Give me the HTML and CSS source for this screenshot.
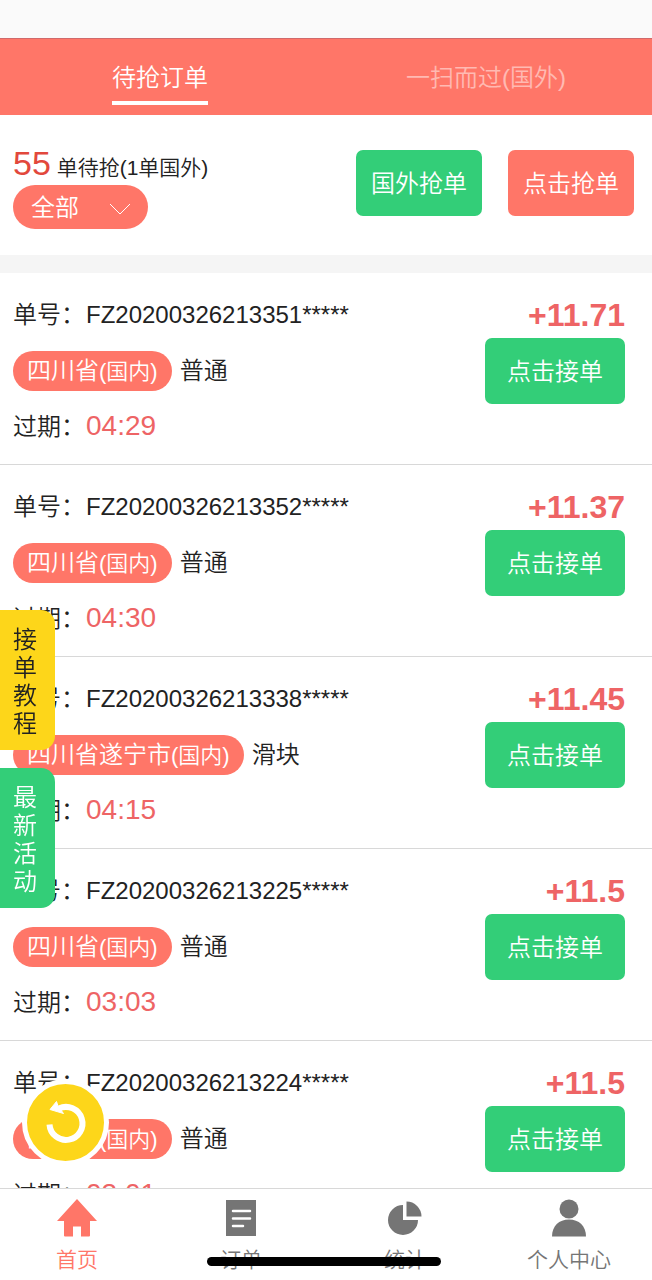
FILE: index.html
```
<!DOCTYPE html>
<html lang="zh-CN">
<head>
    <meta charset="UTF-8">
    <meta name="viewport" content="width=device-width, initial-scale=1.0">
    <title>待抢订单</title>
    <link rel="stylesheet" href="styles.css">
</head>
<body>
    <div class="app">
        <div class="status-bar"></div>
        <header class="tabs">
            <div class="tab-cell"><button class="tab active">待抢订单</button></div>
            <div class="tab-cell"><button class="tab">一扫而过(国外)</button></div>
        </header>

        <section class="summary">
            <div class="summary-left">
                <p class="count"><span class="count-number">55</span> 单待抢(1单国外)</p>
                <div class="filter">
                    <select class="filter-select" aria-label="筛选">
                        <option>全部</option>
                        <option>国内</option>
                        <option>国外</option>
                    </select>
                    <svg class="filter-arrow" viewBox="0 0 22 12"><path d="M1 1l10 10L21 1"/></svg>
                </div>
            </div>
            <div class="summary-actions">
                <button class="btn btn-green">国外抢单</button>
                <button class="btn btn-red">点击抢单</button>
            </div>
        </section>

        <main class="orders" id="orders"></main>

        <nav class="tabbar">
            <a class="tabbar-item active" href="#home">
                <svg class="tabbar-icon" viewBox="0 0 42 40"><path d="M21 1L1 23h7v14.500q0 1 1 1h8v-10h8v10h8q1 0 1-1V23h7z"/></svg>
                <span>首页</span>
            </a>
            <a class="tabbar-item" href="#orders">
                <svg class="tabbar-icon" viewBox="0 0 42 40"><path d="M6 2h30v36H6z"/><path class="icon-line" d="M13 13h17M13 20.500h17M13 28h10"/></svg>
                <span>订单</span>
            </a>
            <a class="tabbar-item" href="#stats">
                <svg class="tabbar-icon" viewBox="0 0 42 40"><path d="M19 7a15 15 0 1 0 15 15H19z"/><path d="M22.500 3.500a15 15 0 0 1 15 15h-15z"/></svg>
                <span>统计</span>
            </a>
            <a class="tabbar-item" href="#mine">
                <svg class="tabbar-icon" viewBox="0 0 42 40"><circle cx="21" cy="11" r="9.500"/><path d="M4 38.500C4 28 11 21.500 21 21.500S38 28 38 38.500z"/></svg>
                <span>个人中心</span>
            </a>
        </nav>
    </div>

    <div class="side-links">
        <a class="side-link side-yellow" href="#guide">接单教程</a>
        <a class="side-link side-green" href="#events">最新活动</a>
    </div>
    <button class="refresh" aria-label="刷新">
        <svg viewBox="0 0 44 44"><path class="refresh-arc" d="M5.500 23.500A16.500 16.500 0 1 0 15 7.500"/><path class="refresh-head" d="M6 8.500L12.500 .5L14 5L19.500 12.500z"/></svg>
    </button>
    <div class="home-indicator"></div>

    <script>
        const orders = [
            { no: "FZ20200326213351*****", area: "四川省", type: "普通", time: "04:29", price: "+11.71" },
            { no: "FZ20200326213352*****", area: "四川省", type: "普通", time: "04:30", price: "+11.37" },
            { no: "FZ20200326213338*****", area: "四川省遂宁市", type: "滑块", time: "04:15", price: "+11.45" },
            { no: "FZ20200326213225*****", area: "四川省", type: "普通", time: "03:03", price: "+11.5" },
            { no: "FZ20200326213224*****", area: "四川省", type: "普通", time: "03:01", price: "+11.5" }
        ];

        document.getElementById("orders").innerHTML = orders.map(o => `
            <article class="order">
                <div class="order-info">
                    <p class="order-row"><span class="label">单号：</span>${o.no}</p>
                    <p class="order-area"><span class="pill">${o.area}<small>(国内)</small></span>${o.type}</p>
                    <p class="order-row"><span class="label">过期：</span><span class="time">${o.time}</span></p>
                </div>
                <div class="order-side">
                    <strong class="price">${o.price}</strong>
                    <button class="btn btn-green btn-take">点击接单</button>
                </div>
            </article>`).join("");
    </script>
</body>
</html>
```
FILE: styles.css
```
* {
    box-sizing: border-box;
}
body {
    margin: 0;
    font-family: "Liberation Sans", "Noto Sans CJK SC", sans-serif;
    font-size: 24px;
    font-weight: 350;
    color: #222;
    background: #fff;
}
p {
    margin: 0;
}
button, select {
    font: inherit;
    border: none;
    padding: 0;
    cursor: pointer;
}
a {
    text-decoration: none;
}
.app {
    height: 100vh;
    display: flex;
    flex-direction: column;
}
.status-bar {
    flex: none;
    height: 38px;
    background: #fafafa;
}

/* top tabs */
.tabs {
    flex: none;
    display: flex;
    height: 77px;
    background: #ff7668;
    border-top: 1px solid #d0696a;
}
.tab-cell {
    flex: 1;
    display: flex;
    justify-content: center;
    align-items: flex-start;
    padding-top: 16px;
    padding-right: 6px;
}
.tab {
    height: 50px;
    line-height: 44px;
    background: none;
    color: rgba(255, 255, 255, 0.5);
    border-bottom: 4px solid transparent;
}
.tab.active {
    color: #fff;
    border-bottom-color: #fff;
}

/* summary */
.summary {
    flex: none;
    display: flex;
    justify-content: space-between;
    align-items: flex-start;
    padding: 29px 18px 26px 13px;
    border-bottom: 18px solid #f5f5f5;
}
.count {
    height: 41px;
    font-size: 21px;
    line-height: 39px;
}
.count-number {
    font-size: 34px;
    color: #e2483c;
}
.filter {
    position: relative;
    width: 135px;
}
.filter-select {
    display: block;
    width: 100%;
    height: 44px;
    padding: 0 18px;
    color: #fff;
    background: #ff7668;
    border-radius: 22px;
    appearance: none;
}
.filter-arrow {
    position: absolute;
    right: 17px;
    top: 18px;
    width: 22px;
    height: 12px;
    fill: none;
    stroke: #fff;
    stroke-width: 1;
    pointer-events: none;
}
.summary-actions {
    display: flex;
    gap: 26px;
    padding-top: 6px;
}
.btn {
    width: 126px;
    height: 66px;
    padding-bottom: 3px;
    color: #fff;
    border-radius: 7px;
}
.btn-green {
    background: #33ce78;
}
.btn-red {
    background: #ff7668;
}
.btn-take {
    width: 140px;
}

/* order list */
.orders {
    flex: 1;
    min-height: 0;
    overflow-y: auto;
    scrollbar-width: none;
}
.order {
    display: flex;
    justify-content: space-between;
    padding: 24px 27px 19px 13px;
    border-bottom: 1px solid #d8d8d8;
}
.order-info {
    display: flex;
    flex-direction: column;
    gap: 18px;
}
.order-row {
    height: 36px;
    line-height: 36px;
}
.label {
    margin-right: 1px;
}
.order-area {
    display: flex;
    align-items: center;
    gap: 8px;
    line-height: 40px;
}
.pill {
    height: 40px;
    padding: 0 14px;
    color: #fff;
    background: #ff7668;
    border-radius: 20px;
}
.pill small {
    font-size: 22px;
}
.time {
    font-size: 28px;
    line-height: 32px;
    color: #ee6465;
}
.order-side {
    display: flex;
    flex-direction: column;
    align-items: flex-end;
    gap: 5px;
}
.price {
    font-size: 32px;
    font-weight: 700;
    line-height: 36px;
    color: #ee6465;
}

/* bottom navigation */
.tabbar {
    flex: none;
    display: flex;
    justify-content: space-between;
    height: 92px;
    padding: 9px 41px 0 35px;
    border-top: 1px solid #d8d8d8;
    background: #fff;
}
.tabbar-item {
    display: flex;
    flex-direction: column;
    align-items: center;
    gap: 6px;
    width: 84px;
    font-size: 21px;
    line-height: 32px;
    color: #757575;
}
.tabbar-item.active {
    color: #ff7668;
}
.tabbar-icon {
    width: 42px;
    height: 40px;
    fill: currentColor;
}
.icon-line {
    stroke: #fff;
    stroke-width: 2.5;
    stroke-linecap: round;
}

/* floating items */
.side-links {
    position: fixed;
    left: 0;
    top: 610px;
    display: flex;
    flex-direction: column;
    gap: 18px;
}
.side-link {
    width: 55px;
    padding: 16px 18px 12px 13px;
    line-height: 28px;
    border-radius: 0 14px 14px 0;
    word-break: break-all;
}
.side-yellow {
    color: #222;
    background: #fdd61a;
}
.side-green {
    color: #fff;
    background: #33ce78;
}
.refresh {
    position: fixed;
    left: 22px;
    bottom: 114px;
    display: flex;
    justify-content: center;
    align-items: center;
    width: 87px;
    height: 87px;
    border: 5px solid #fff;
    border-radius: 50%;
    background: #fdd61a;
}
.refresh svg {
    width: 44px;
    height: 44px;
    overflow: visible;
}
.refresh-arc {
    fill: none;
    stroke: #fff;
    stroke-width: 6;
}
.refresh-head {
    fill: #fff;
    stroke: #fff;
    stroke-width: 1;
    stroke-linejoin: round;
}
.home-indicator {
    position: fixed;
    left: 50%;
    bottom: 14px;
    width: 234px;
    height: 9px;
    margin-left: -119px;
    border-radius: 5px;
    background: #000;
}
```
